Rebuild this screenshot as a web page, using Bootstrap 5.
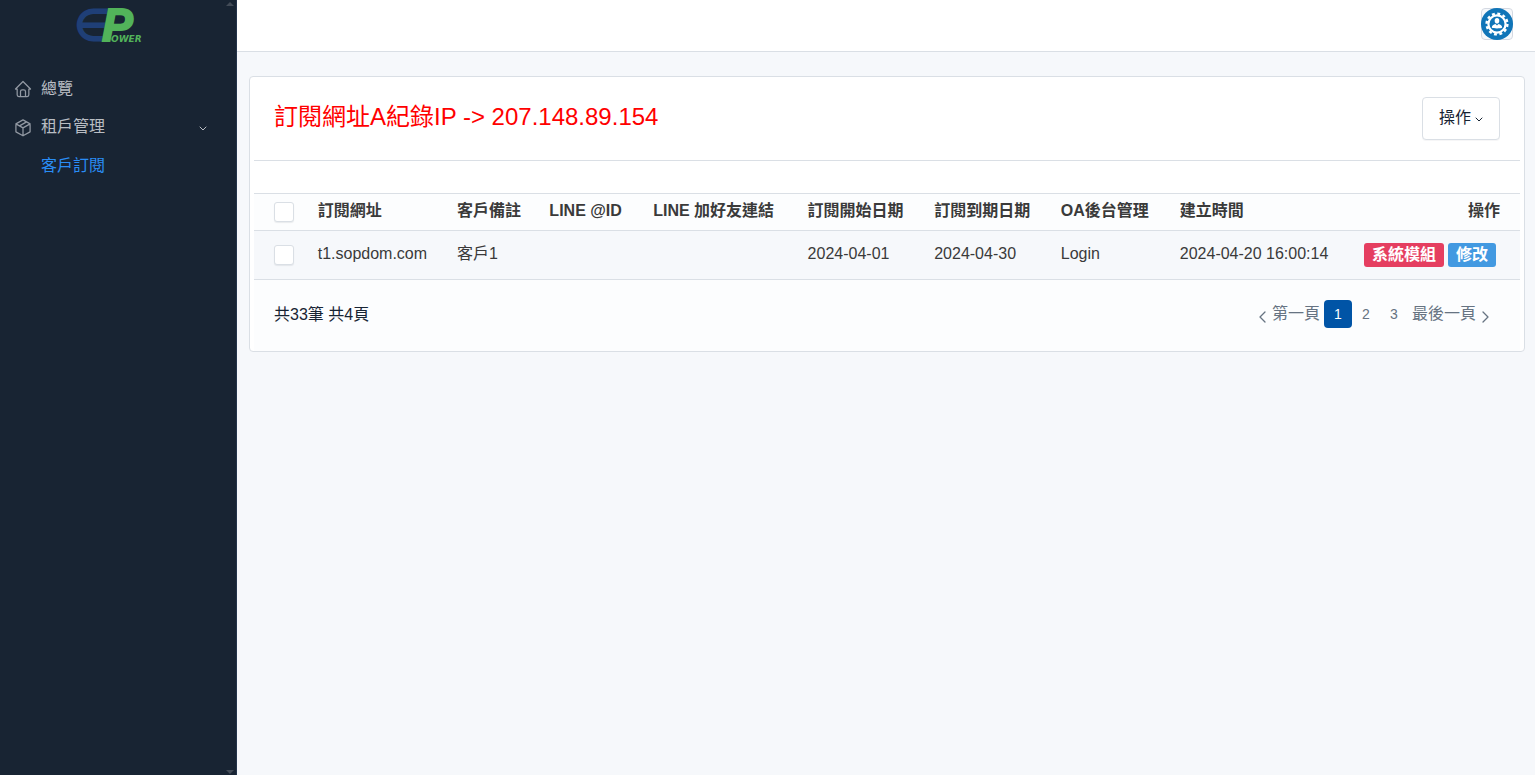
<!DOCTYPE html>
<html lang="zh-Hant">
<head>
<meta charset="utf-8">
<meta name="viewport" content="width=device-width, initial-scale=1">
<title>客戶訂閱</title>
<link href="https://cdn.jsdelivr.net/npm/bootstrap@5.3.0/dist/css/bootstrap.min.css" rel="stylesheet">
<style>
  body { font-family: "Liberation Sans", "Noto Sans CJK TC", sans-serif; font-size: 16px; line-height: 24px; color: #182433; background: #f6f8fb; --line: #dadfe5; }
  .icon { fill: none; stroke: currentColor; stroke-linecap: round; stroke-linejoin: round; display: block; flex: none; }
  .side { width: 237px; background: #182433; border-right: 1px solid #24344b; }
  .side-arrow { position: absolute; right: 1px; width: 10px; height: 5px; fill: #424b57; }
  .side-arrow.up { top: 2px; }
  .side-arrow.down { bottom: 0; }
  .side-logo { height: 50px; }
  .side-link { display: flex; align-items: center; height: 38px; padding: 0 29px 0 13px; color: #b9bdc3; text-decoration: none; }
  .side-link .icon { color: #9299a3; }
  .side-link .icon.chev { color: #b9bdc3; }
  .side-link span { margin-left: 8px; }
  .side-link.sub { color: #2a8df5; padding-left: 33px; height: 40px; }
  .topbar { height: 52px; background: #fff; border-bottom: 1px solid var(--line); padding: 8px 22px 0 0; }
  .panel { border: 1px solid var(--line); border-radius: 4px; background: #fff; padding: 4px; margin: 24px 10px 24px 12px; }
  .panel-head { padding: 16px 20px 20px; border-bottom: 1px solid var(--line); }
  .panel-title { font-size: 24px; line-height: 40px; color: #f00; font-weight: 400; }
  .btn-ops { height: 43px; padding: 0 16px 2px; border: 1px solid var(--line); border-radius: 4px; background: #fff; color: #182433; box-shadow: 0 1px 0 rgba(24,36,51,.04); }
  .subs { table-layout: fixed; margin: 32px 0 0; border-top: 1px solid var(--line); --bs-table-bg: transparent; }
  .subs > :not(caption) > * > * { padding: 0 8px 2px; border-bottom: 1px solid var(--line); color: #3a3a3a; white-space: nowrap; vertical-align: middle; box-shadow: none; }
  .subs > :not(caption) > * > :first-child { padding-left: 20px; }
  .subs > :not(caption) > * > :last-child { padding-right: 20px; text-align: right; }
  .subs thead th { height: 37px; background: #fcfdfe; }
  .subs tbody td { height: 49px; background: #f6f8fb; }
  .subs .form-check-input { display: block; width: 20px; height: 20px; margin: 2px 0 0; border: 1px solid var(--line); border-radius: 3px; box-shadow: 0 1px 1px rgba(24,36,51,.08); }
  .tags { padding-top: 2px; margin-right: 4px; }
  .tag { height: 24px; line-height: 22px; padding: 0 8px; border: 0; border-radius: 3px; color: #fff; font-weight: 700; }
  .tag-red { background: #e53e60; }
  .tag-blue { background: #4299e1; }
  .panel-foot { background: #fcfdfe; padding: 20px 30px 21px 20px; margin-bottom: -4px; line-height: 30px; }
  .pager a { display: flex; align-items: center; height: 28px; color: #667382; text-decoration: none; }
  .pager .num { width: 28px; justify-content: center; font-size: 14px; border-radius: 4px; }
  .pager .num.on { background: #0054a6; color: #fff; }
  .pager .icon { margin-top: 5px; }
</style>
</head>
<body>
<div class="d-flex min-vh-100">
  <aside class="side position-relative flex-shrink-0">
    <svg class="side-arrow up" viewBox="0 0 10 5"><path d="M1 4 5 0l4 4z"/></svg>
    <a href="#" class="side-logo d-block" aria-label="EPower">
      <svg width="236" height="50" viewBox="0 0 236 50" overflow="visible" font-family="Liberation Sans, sans-serif" font-style="italic">
        <text x="74" y="40" font-size="43" font-family="DejaVu Sans, sans-serif" fill="#1f3f77" stroke="#1f3f77" stroke-width="2">∈</text>
        <text x="102" y="41" font-size="46" font-weight="700" fill="#52b35a" stroke="#52b35a" stroke-width="2">P</text>
        <text x="111" y="42" font-size="9" font-family="DejaVu Sans, sans-serif" font-weight="700" fill="#52b35a">OWER</text>
      </svg>
    </a>
    <nav class="pt-3 mt-1" aria-label="主選單">
      <a class="side-link" href="#">
        <svg class="icon" width="20" height="20" viewBox="0 0 24 24" stroke-width="1.5"><path d="M5 12H3l9-9 9 9h-2M5 12v7a2 2 0 0 0 2 2h10a2 2 0 0 0 2-2v-7M9 21v-6a2 2 0 0 1 2-2h2a2 2 0 0 1 2 2v6"/></svg>
        <span>總覽</span>
      </a>
      <a class="side-link" href="#" aria-expanded="true">
        <svg class="icon" width="20" height="20" viewBox="0 0 24 24" stroke-width="1.5"><path d="M12 3.500l8.500 4.700v9.600L12 22.500l-8.500-4.700V8.200zM12 13l8.500-4.800M12 13v9.500M12 13 3.500 8.200M16.300 5.800l-8.500 4.800"/></svg>
        <span>租戶管理</span>
        <svg class="icon chev ms-auto mt-1" width="8" height="6" viewBox="0 0 8 6"><path d="M1 1l3 3 3-3"/></svg>
      </a>
      <a class="side-link sub" href="#" aria-current="page"><span>客戶訂閱</span></a>
    </nav>
    <svg class="side-arrow down" viewBox="0 0 10 5"><path d="M1 0l4 4 4-4z"/></svg>
  </aside>

  <div class="flex-grow-1">
    <header class="topbar d-flex justify-content-end">
      <a href="#" aria-label="帳號">
        <svg width="32" height="32" viewBox="0 0 32 32" class="d-block">
          <rect x=".5" y=".5" width="31" height="31" rx="3.500" fill="#f6f8fb" stroke="#d4d9e2"/>
          <circle cx="16" cy="16" r="16" fill="#1075b8"/>
          <circle cx="16" cy="16" r="8.600" fill="none" stroke="#fff" stroke-width="2.200"/>
          <circle cx="16" cy="16" r="10.400" fill="none" stroke="#fff" stroke-width="2.400" stroke-dasharray="2.900 2.545"/>
          <ellipse cx="16" cy="12.800" rx="2.300" ry="2.800" fill="#fff"/>
          <path d="M10.800 19.500c0-2 1.700-2.800 3.700-3.500l1.500 1.500 1.500-1.500c2 .7 3.700 1.500 3.700 3.500-1 1.200-9.400 1.200-10.400 0z" fill="#fff"/>
        </svg>
      </a>
    </header>

    <main class="panel">
      <div class="panel-head d-flex justify-content-between align-items-start">
        <h1 class="panel-title m-0">訂閱網址A紀錄IP -&gt; 207.148.89.154</h1>
        <button type="button" class="btn-ops d-flex align-items-center gap-1">操作
          <svg class="icon mt-1" width="8" height="6" viewBox="0 0 8 6"><path d="M1 1l3 3 3-3"/></svg>
        </button>
      </div>

      <table class="table subs">
        <colgroup>
          <col style="width:4.4%"><col style="width:11%"><col style="width:7.3%"><col style="width:8.2%"><col style="width:12.2%"><col style="width:10%"><col style="width:10%"><col style="width:9.4%"><col style="width:13%"><col>
        </colgroup>
        <thead>
          <tr>
            <th scope="col"><input class="form-check-input" type="checkbox" aria-label="全選"></th>
            <th scope="col">訂閱網址</th>
            <th scope="col">客戶備註</th>
            <th scope="col">LINE @ID</th>
            <th scope="col">LINE 加好友連結</th>
            <th scope="col">訂閱開始日期</th>
            <th scope="col">訂閱到期日期</th>
            <th scope="col">OA後台管理</th>
            <th scope="col">建立時間</th>
            <th scope="col">操作</th>
          </tr>
        </thead>
        <tbody>
          <tr>
            <td><input class="form-check-input" type="checkbox" aria-label="選取 t1.sopdom.com"></td>
            <td>t1.sopdom.com</td>
            <td>客戶1</td>
            <td></td>
            <td></td>
            <td>2024-04-01</td>
            <td>2024-04-30</td>
            <td>Login</td>
            <td>2024-04-20 16:00:14</td>
            <td><div class="tags d-flex justify-content-end gap-1"><button type="button" class="tag tag-red">系統模組</button><button type="button" class="tag tag-blue">修改</button></div></td>
          </tr>
        </tbody>
      </table>

      <div class="panel-foot d-flex justify-content-between">
        <p class="m-0">共33筆 共4頁</p>
        <nav class="pager d-flex" aria-label="分頁">
          <a href="#"><svg class="icon me-1" width="10" height="12" viewBox="0 0 10 12" stroke-width="1.3"><path d="M7 1 2 6l5 5"/></svg><span class="me-1">第一頁</span></a>
          <a href="#" class="num on" aria-current="page">1</a>
          <a href="#" class="num">2</a>
          <a href="#" class="num">3</a>
          <a href="#"><span class="ms-1">最後一頁</span><svg class="icon ms-1" width="10" height="12" viewBox="0 0 10 12" stroke-width="1.3"><path d="M3 1l5 5-5 5"/></svg></a>
        </nav>
      </div>
    </main>
  </div>
</div>
<script src="https://cdn.jsdelivr.net/npm/bootstrap@5.3.0/dist/js/bootstrap.bundle.min.js"></script>
</body>
</html>
